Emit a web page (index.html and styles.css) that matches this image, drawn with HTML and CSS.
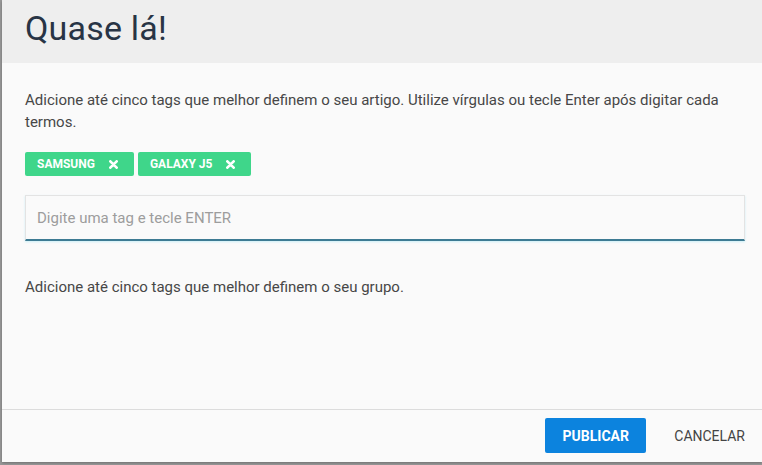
FILE: index.html
```html
<!DOCTYPE html>
<html lang="pt-BR">
<head>
  <meta charset="UTF-8" />
  <title>Quase lá!</title>
  <meta name="viewport" content="width=device-width, initial-scale=1.0" />
  <link rel="stylesheet" href="styles.css">
</head>
<body>

  <div class="modal">
    <div class="modal-header">
      <h1>Quase lá!</h1>
    </div>

    <div class="modal-body">
      <p class="hint">Adicione até cinco tags que melhor definem o seu artigo. Utilize vírgulas ou tecle Enter após digitar cada termos.</p>

      <div class="tags">
        <span class="tag">SAMSUNG
          <svg class="tag-x" viewBox="0 0 10 10"><path d="M1.5 1.5 L8.5 8.5 M8.5 1.5 L1.5 8.5" /></svg>
        </span>
        <span class="tag">GALAXY J5
          <svg class="tag-x" viewBox="0 0 10 10"><path d="M1.5 1.5 L8.5 8.5 M8.5 1.5 L1.5 8.5" /></svg>
        </span>
      </div>

      <input type="text" class="tag-input" placeholder="Digite uma tag e tecle ENTER" />

      <p class="hint group-hint">Adicione até cinco tags que melhor definem o seu grupo.</p>
    </div>

    <div class="modal-footer">
      <button class="btn btn-primary">PUBLICAR</button>
      <button class="btn btn-link">CANCELAR</button>
    </div>
  </div>

</body>
</html>
```

FILE: styles.css
```css
body {
  margin: 0;
  background: #9a9a9a;
  font-family: Roboto, "Liberation Sans", Arial, sans-serif;
  overflow: hidden;
  height: 465px;
}
.modal {
  margin-left: 2px;
  height: 462px;
  background: #fafafa;
  display: flex;
  flex-direction: column;
  box-shadow: 0 1px 3px rgba(0,0,0,0.3);
}
.modal-header {
  height: 63px;
  background: #eeeeee;
  padding: 0 23px;
  display: flex;
  align-items: center;
}
h1 {
  margin: 0 0 8px;
  font-size: 34px;
  font-weight: 400;
  color: #283445;
  letter-spacing: 0.2px;
}
.modal-body {
  flex: 1;
  padding: 26px 17px 0 23px;
}
.hint {
  margin: 0;
  font-size: 15px;
  line-height: 22px;
  color: #474747;
}
.tags {
  display: flex;
  gap: 4px;
  margin-top: 19px;
}
.tag {
  display: flex;
  align-items: center;
  gap: 14px;
  height: 24px;
  padding: 0 16px 0 12px;
  background: #3fd68a;
  color: #fff;
  font-size: 12px;
  font-weight: 700;
  border-radius: 2px;
}
.tag-x {
  width: 9px;
  height: 9px;
  stroke: #fff;
  stroke-width: 3;
  stroke-linecap: round;
  fill: none;
}
.tag-input {
  display: block;
  box-sizing: border-box;
  width: 720px;
  height: 46px;
  margin-top: 19px;
  padding: 0 11px;
  border: 1px solid #e3e3e3;
  border-bottom: 2px solid #3d7b93;
  background: #fafafa;
  font-family: inherit;
  font-size: 15px;
  color: #333;
  outline: none;
  box-shadow: 0 1px 2px rgba(120,220,240,0.35);
}
.tag-input::placeholder {
  color: #9d9d9d;
}
.group-hint {
  margin-top: 35px;
}
.modal-footer {
  border-top: 1px solid #dcdcdc;
  padding: 8px 17px 9px 23px;
  display: flex;
  justify-content: flex-end;
  align-items: center;
}
.btn {
  height: 35px;
  border: none;
  font-family: inherit;
  font-size: 14px;
  cursor: pointer;
}
.btn-primary {
  width: 101px;
  background: #0c83de;
  color: #fff;
  font-weight: 700;
  border-radius: 2px;
}
.btn-link {
  background: none;
  color: #444;
  padding: 0 0 0 28px;
}
```
